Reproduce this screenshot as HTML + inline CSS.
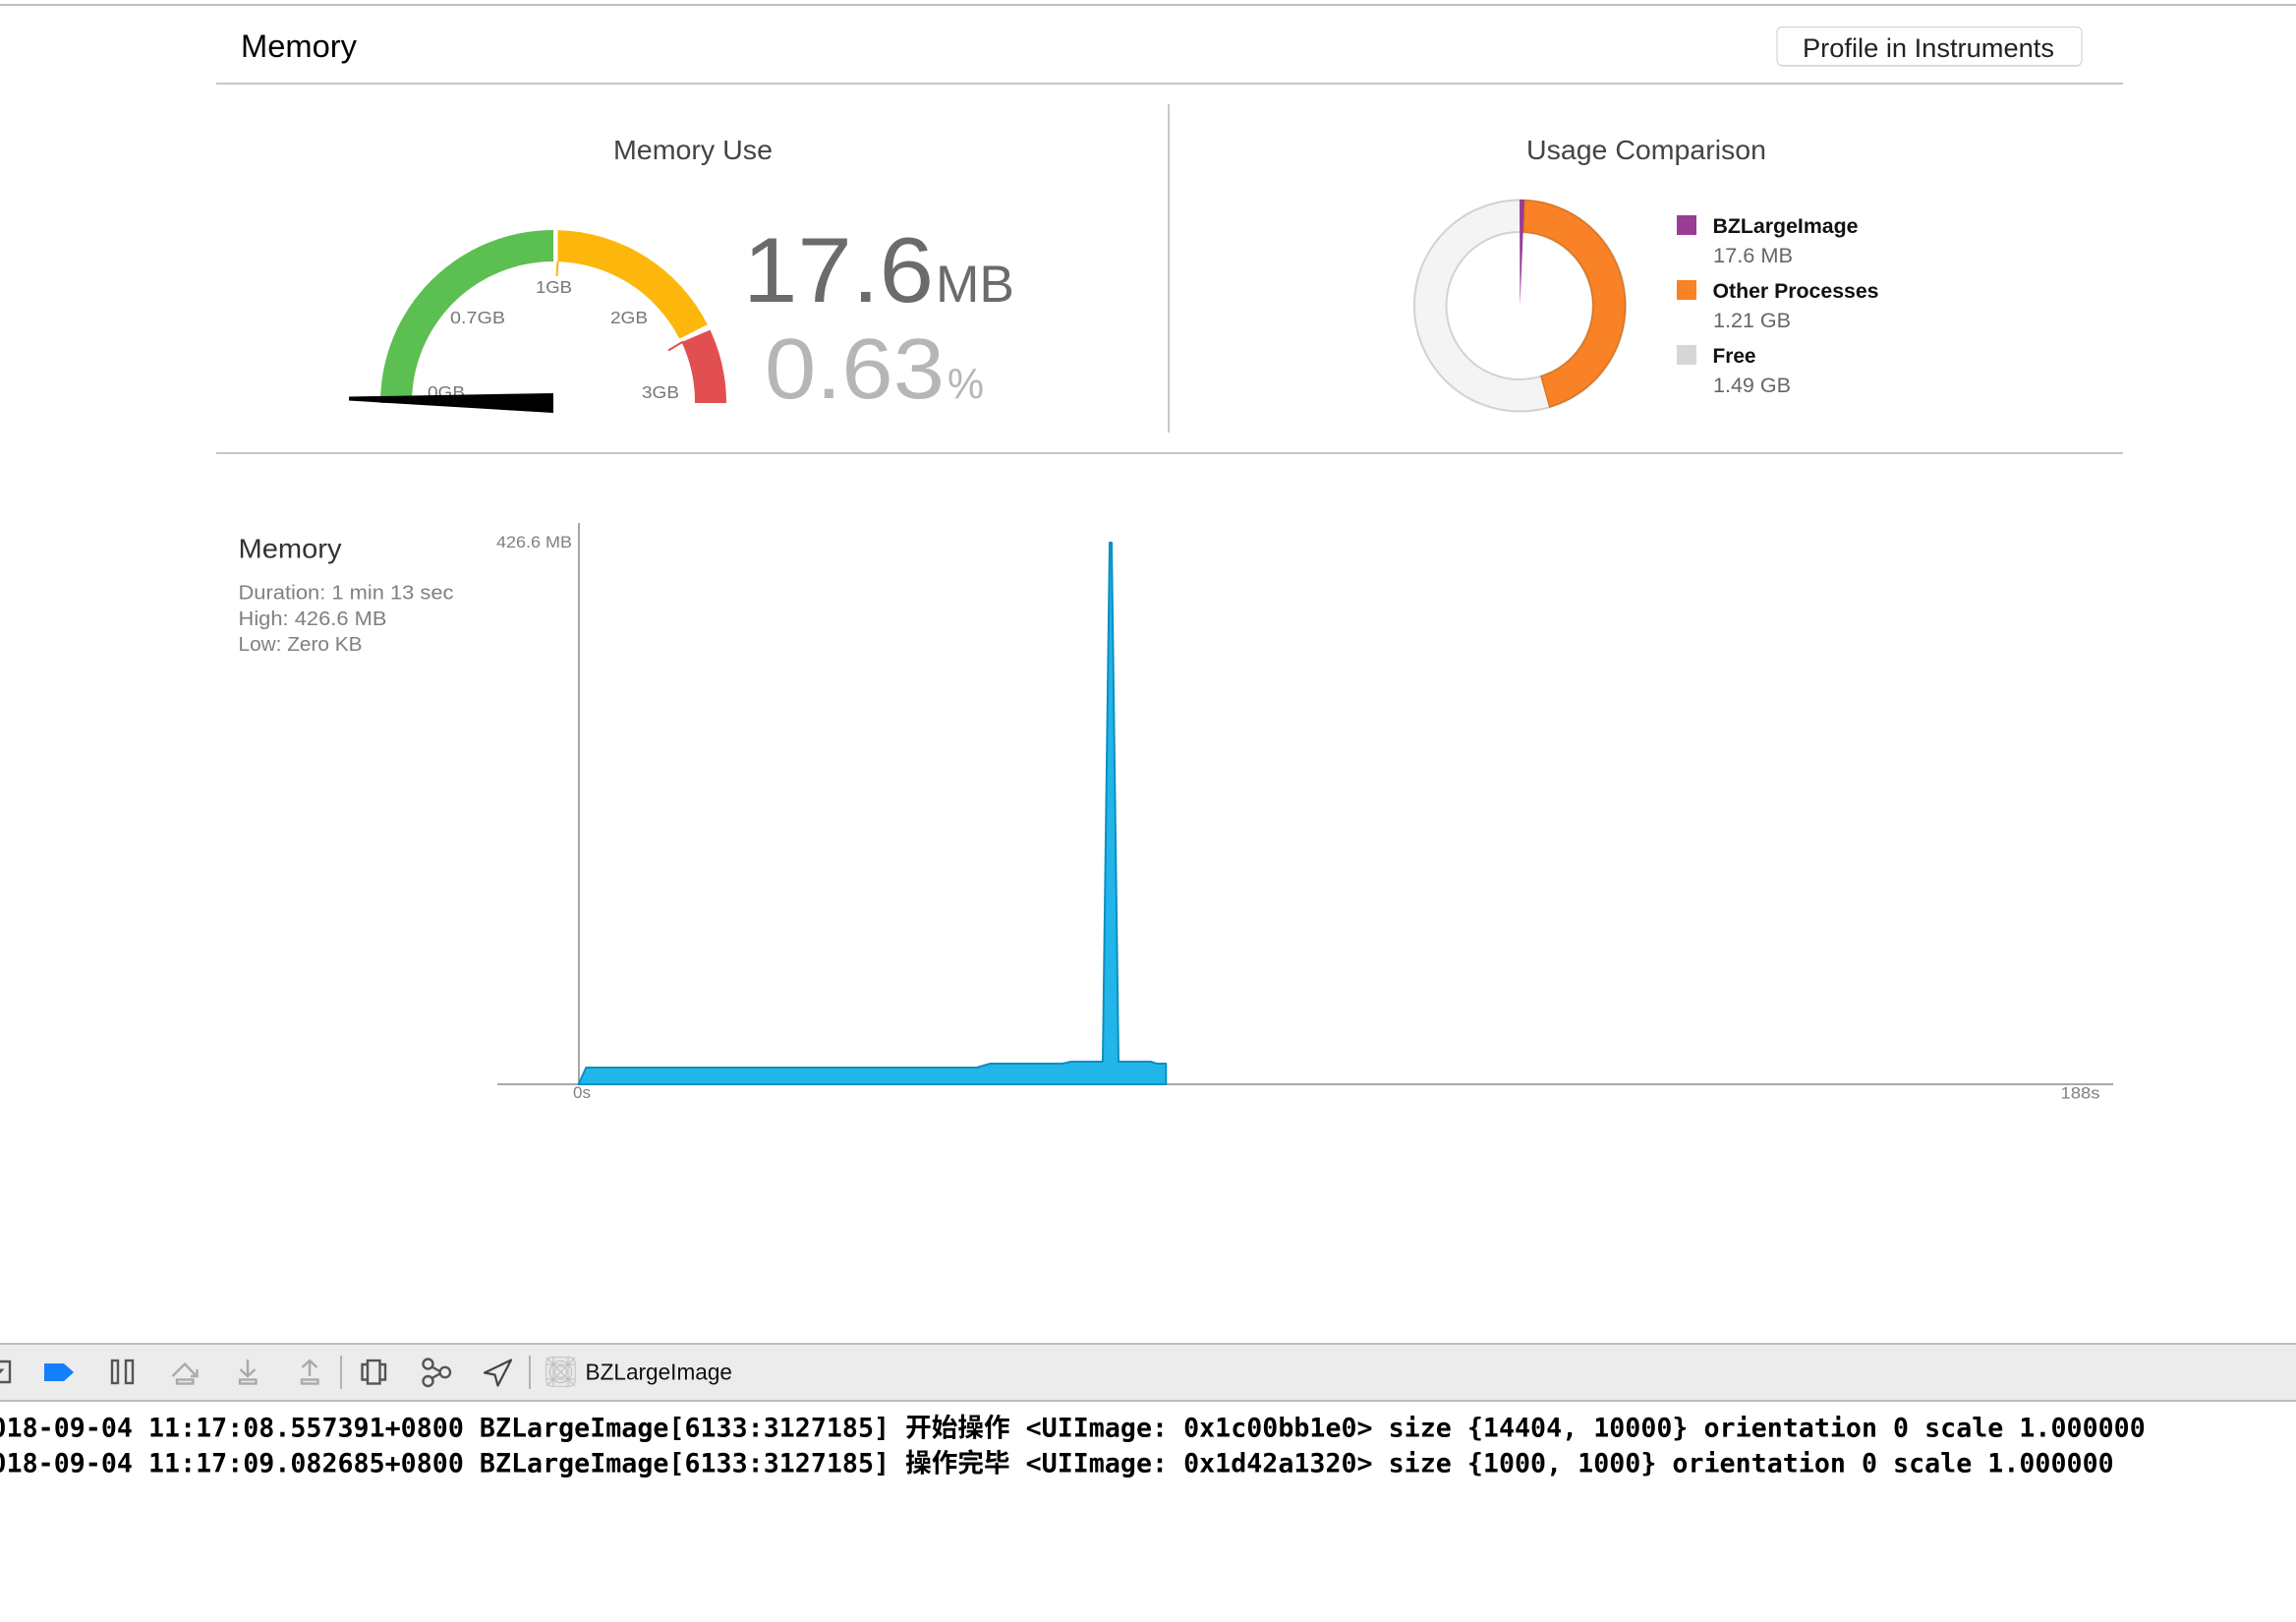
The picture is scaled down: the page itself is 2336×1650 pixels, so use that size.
<!DOCTYPE html>
<html lang="en">
<head>
<meta charset="utf-8">
<title>Memory</title>
<style>
html,body{margin:0;padding:0;background:#fff;width:2336px;height:1650px;overflow:hidden}
svg{display:block;position:absolute;left:0;top:0}
text{font-family:"Liberation Sans","Noto Sans CJK SC",sans-serif;white-space:pre}
.mono{font-family:"DejaVu Sans Mono","Liberation Mono","Noto Sans CJK SC",monospace;font-weight:bold;font-size:26.6px;fill:#000;letter-spacing:0.033px}
.gl{font-size:17.5px;fill:#777}
.lb{font-size:21px;font-weight:bold;fill:#111}
.lv{font-size:21px;fill:#666}
.st{font-size:20.5px;fill:#808080}
.ax{font-size:16.5px;fill:#808080}
</style>
</head>
<body>
<svg width="2336" height="1650" viewBox="0 0 2336 1650" xmlns="http://www.w3.org/2000/svg">
<rect width="2336" height="1650" fill="#fff"/>
<!-- rules -->
<rect x="0" y="4" width="2336" height="2" fill="#c0c0c0"/>
<rect x="220" y="84" width="1940" height="2" fill="#c6c6c6"/>
<rect x="220" y="460" width="1940" height="2" fill="#c6c6c6"/>
<rect x="1188" y="106" width="2" height="334" fill="#c8c8c8"/>

<!-- header -->
<text x="245" y="58" font-size="32" fill="#000" textLength="118" lengthAdjust="spacingAndGlyphs">Memory</text>
<rect x="1808" y="28.5" width="310" height="39" rx="5" fill="#bdbdbd"/>
<rect x="1808" y="27.5" width="310" height="39" rx="5" fill="#fff" stroke="#d6d6d6" stroke-width="1.2"/>
<text x="1834" y="58" font-size="27" fill="#222" textLength="256" lengthAdjust="spacingAndGlyphs">Profile in Instruments</text>

<!-- Memory Use -->
<text x="624" y="162" font-size="28" fill="#444" textLength="162" lengthAdjust="spacingAndGlyphs">Memory Use</text>
<path d="M387 410A176 176 0 0 1 563 234L563 266A144 144 0 0 0 419 410Z" fill="#5cbf52"/>
<path d="M567.5 234.1A176 176 0 0 1 719.8 330.1L691.3 344.6A144 144 0 0 0 567.5 266.1Z" fill="#fdb70c"/>
<path d="M722.5 335.6A176 176 0 0 1 739 410L707 410A144 144 0 0 0 693.5 348Z" fill="#e24f50"/>
<path d="M567.5 266L566.5 281" stroke="#fdb70c" stroke-width="2" fill="none"/>
<path d="M695 347.5L680 356.5" stroke="#e24f50" stroke-width="2" fill="none"/>
<text class="gl" x="545" y="298" textLength="37" lengthAdjust="spacingAndGlyphs">1GB</text>
<text class="gl" x="458" y="329" textLength="56" lengthAdjust="spacingAndGlyphs">0.7GB</text>
<text class="gl" x="621" y="329" textLength="38" lengthAdjust="spacingAndGlyphs">2GB</text>
<text class="gl" x="435" y="405" textLength="38" lengthAdjust="spacingAndGlyphs">0GB</text>
<text class="gl" x="653" y="405" textLength="38" lengthAdjust="spacingAndGlyphs">3GB</text>
<polygon points="355,403.5 563,400 563,420 355,407.5" fill="#000"/>
<text x="756" y="307" font-size="94" fill="#6b6b6b" textLength="194" lengthAdjust="spacingAndGlyphs">17.6</text>
<text x="952" y="307" font-size="53" fill="#6b6b6b" textLength="80" lengthAdjust="spacingAndGlyphs">MB</text>
<text x="778" y="405" font-size="87" fill="#b6b6b6" textLength="183" lengthAdjust="spacingAndGlyphs">0.63</text>
<text x="964" y="405" font-size="44" fill="#b6b6b6" textLength="37" lengthAdjust="spacingAndGlyphs">%</text>

<!-- Usage Comparison -->
<text x="1553" y="162" font-size="28" fill="#444" textLength="244" lengthAdjust="spacingAndGlyphs">Usage Comparison</text>
<path fill-rule="evenodd" d="M1439 311a107.5 107.5 0 1 0 215 0a107.5 107.5 0 1 0 -215 0ZM1471.5 311a74.5 75 0 1 0 149 0a74.5 75 0 1 0 -149 0Z" fill="#f4f4f4" stroke="#d2d2d2" stroke-width="2"/>
<path d="M1551 203.6A107.5 107.5 0 0 1 1576.7 414L1568 382.7A74.5 75 0 0 0 1550 236Z" fill="#f98126" stroke="#d9761f" stroke-width="1.5"/>
<polygon points="1546.5,311 1546,203 1551,203" fill="#983c96"/>
<rect x="1706" y="219" width="20" height="20" fill="#983c96"/>
<rect x="1706" y="285" width="20" height="20" fill="#f98126"/>
<rect x="1706" y="351" width="20" height="20" fill="#d6d6d6"/>
<text class="lb" x="1742.5" y="237" textLength="148" lengthAdjust="spacingAndGlyphs">BZLargeImage</text>
<text class="lv" x="1743" y="267" textLength="81" lengthAdjust="spacingAndGlyphs">17.6 MB</text>
<text class="lb" x="1742.5" y="303" textLength="169" lengthAdjust="spacingAndGlyphs">Other Processes</text>
<text class="lv" x="1743" y="333" textLength="79" lengthAdjust="spacingAndGlyphs">1.21 GB</text>
<text class="lb" x="1742.5" y="369" textLength="44" lengthAdjust="spacingAndGlyphs">Free</text>
<text class="lv" x="1743" y="399" textLength="79" lengthAdjust="spacingAndGlyphs">1.49 GB</text>

<!-- Memory graph -->
<text x="242.5" y="567.5" font-size="28" fill="#333" textLength="105" lengthAdjust="spacingAndGlyphs">Memory</text>
<text class="st" x="242.5" y="609.5" textLength="219" lengthAdjust="spacingAndGlyphs">Duration: 1 min 13 sec</text>
<text class="st" x="242.5" y="636" textLength="151" lengthAdjust="spacingAndGlyphs">High: 426.6 MB</text>
<text class="st" x="242.5" y="662" textLength="126" lengthAdjust="spacingAndGlyphs">Low: Zero KB</text>
<text class="ax" x="505" y="557" textLength="77" lengthAdjust="spacingAndGlyphs">426.6 MB</text>
<rect x="588" y="532" width="2" height="571" fill="#a8a8a8"/>
<rect x="506" y="1102" width="1644" height="2" fill="#a8a8a8"/>
<polygon points="588.6,1103 596.3,1086 993.8,1086 1007.4,1082 1081,1082 1089.8,1080 1122,1080 1129,552 1131,552 1138,1080 1170.7,1080 1177,1082 1186.3,1082 1186.3,1103" fill="#22b5ea" stroke="#0a8fbf" stroke-width="2" stroke-linejoin="round"/>
<text class="ax" x="583" y="1117" textLength="18" lengthAdjust="spacingAndGlyphs">0s</text>
<text class="ax" x="2096.5" y="1117.3" textLength="40" lengthAdjust="spacingAndGlyphs">188s</text>

<!-- toolbar -->
<rect x="0" y="1366" width="2336" height="60" fill="#ececec"/>
<rect x="0" y="1366" width="2336" height="2" fill="#bebebe"/>
<rect x="0" y="1424" width="2336" height="2" fill="#bebebe"/>
<!-- clipped console toggle -->
<path d="M0 1385H10V1406H0" fill="none" stroke="#555" stroke-width="2.4"/>
<polygon points="0,1392.5 4.5,1392.5 0,1397.5" fill="#555"/>
<!-- breakpoint -->
<polygon points="45,1387 65,1387 75,1396 65,1405 45,1405" fill="#167ffb"/>
<!-- pause -->
<rect x="114" y="1384" width="6" height="23" fill="none" stroke="#555" stroke-width="2.4"/>
<rect x="128" y="1384" width="7" height="23" fill="none" stroke="#555" stroke-width="2.4"/>
<!-- step over -->
<g fill="none" stroke="#aaa" stroke-width="2.4">
<rect x="180" y="1403.5" width="16.5" height="4"/>
<path d="M175.5 1400L188 1387.5L199.5 1399.5"/>
<path d="M194 1400H200.5V1393"/>
<!-- step in -->
<rect x="244" y="1403.5" width="16.5" height="4"/>
<path d="M252 1383V1400M244.5 1393L252 1400L259.5 1393"/>
<!-- step out -->
<rect x="307" y="1403.5" width="16.5" height="4"/>
<path d="M315 1400V1384M307.5 1391L315 1384L322.5 1391"/>
</g>
<rect x="346" y="1379" width="2" height="34" fill="#b2b2b2"/>
<!-- view debugger -->
<g fill="none" stroke="#555" stroke-width="2.4">
<rect x="374" y="1384" width="12.5" height="23.5"/>
<path d="M374 1388H368.5V1403.5H374M386.5 1388H392V1403.5H386.5"/>
<!-- memory graph -->
<circle cx="435.5" cy="1387.5" r="5"/>
<circle cx="452.8" cy="1396" r="5.2"/>
<circle cx="435.5" cy="1405" r="5"/>
<path d="M439.5 1390.5L447.5 1395M439.5 1402L447.5 1397.5"/>
</g>
<!-- location -->
<path d="M520 1383.5L493 1396.5L503.5 1398.5L506.5 1409.5Z" fill="none" stroke="#444" stroke-width="2.2" stroke-linejoin="round"/>
<rect x="538" y="1379" width="2" height="34" fill="#b2b2b2"/>
<!-- app icon template -->
<rect x="555.5" y="1380.5" width="30" height="30" rx="7" fill="#e8e8e8" stroke="#c9c9c9" stroke-width="1.2"/>
<g fill="none" stroke="#bcbcbc" stroke-width="1">
<circle cx="570.5" cy="1395.5" r="11"/>
<circle cx="570.5" cy="1395.5" r="6"/>
<path d="M556 1381L585 1410M585 1381L556 1410M563 1381V1410M578 1381V1410M556 1388H585M556 1403H585"/>
</g>
<text x="595.5" y="1403.5" font-size="23" fill="#111" textLength="149.5" lengthAdjust="spacingAndGlyphs">BZLargeImage</text>

<!-- console -->
<text class="mono" x="-25.5" y="1461.7">2018-09-04 11:17:08.557391+0800 BZLargeImage[6133:3127185] 开始操作 &lt;UIImage: 0x1c00bb1e0&gt; size {14404, 10000} orientation 0 scale 1.000000</text>
<text class="mono" x="-25.5" y="1497.7">2018-09-04 11:17:09.082685+0800 BZLargeImage[6133:3127185] 操作完毕 &lt;UIImage: 0x1d42a1320&gt; size {1000, 1000} orientation 0 scale 1.000000</text>
</svg>
</body>
</html>
